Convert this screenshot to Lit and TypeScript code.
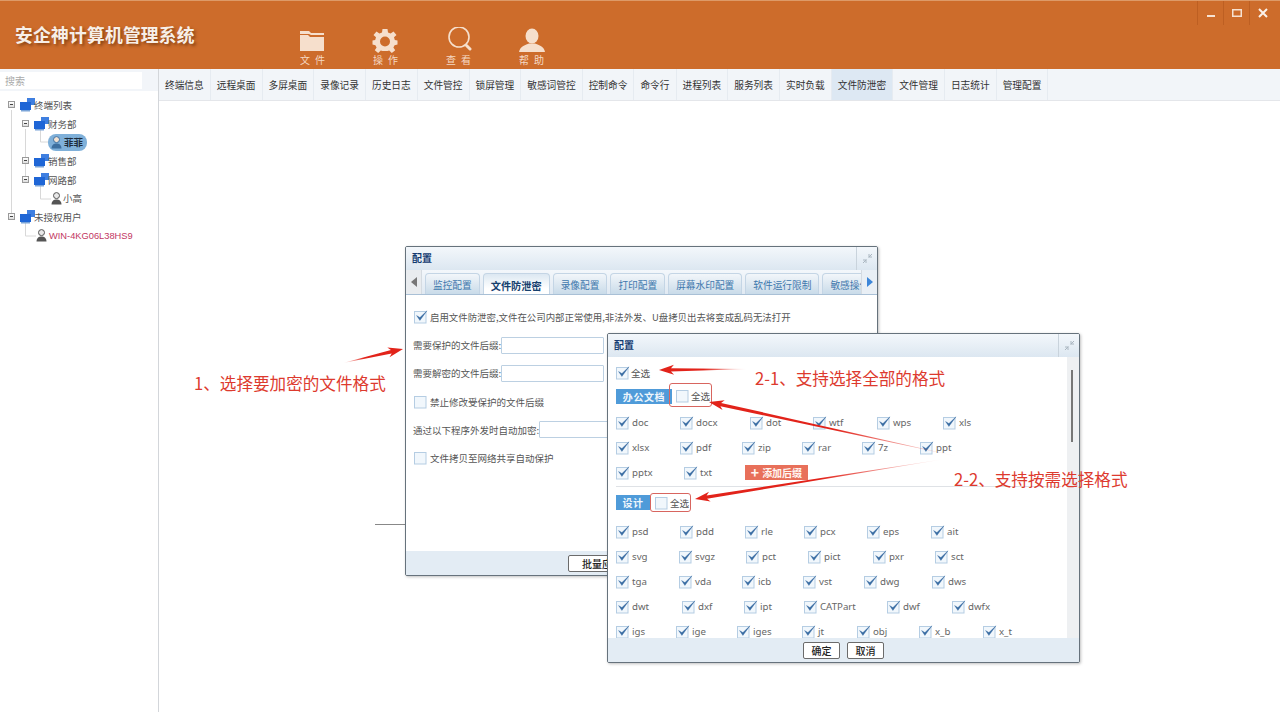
import { LitElement, html, css, svg } from "lit";
import { customElement } from "lit/decorators.js";

type Item = [string, number];
const rowsA: Item[][] = [
  [["doc", 64], ["docx", 70], ["dot", 63], ["wtf", 64], ["wps", 66], ["xls", 60]],
  [["xlsx", 64], ["pdf", 62], ["zip", 60], ["rar", 60], ["7z", 58], ["ppt", 60]],
];
const rowsB: Item[][] = [
  [["psd", 64], ["pdd", 65], ["rle", 59], ["pcx", 63], ["eps", 64], ["ait", 60]],
  [["svg", 63], ["svgz", 67], ["pct", 62], ["pict", 65], ["pxr", 62], ["sct", 60]],
  [["tga", 63], ["vda", 63], ["icb", 61], ["vst", 61], ["dwg", 68], ["dws", 60]],
  [["dwt", 66], ["dxf", 62], ["ipt", 60], ["CATPart", 83], ["dwf", 65], ["dwfx", 60]],
  [["igs", 60], ["ige", 61], ["iges", 65], ["jt", 55], ["obj", 62], ["x_b", 64], ["x_t", 60]],
];
const mainTabs = ["终端信息", "远程桌面", "多屏桌面", "录像记录", "历史日志", "文件管控", "锁屏管理", "敏感词管控", "控制命令", "命令行", "进程列表", "服务列表", "实时负载", "文件防泄密", "文件管理", "日志统计", "管理配置"];
const cfgTabs = ["监控配置", "文件防泄密", "录像配置", "打印配置", "屏幕水印配置", "软件运行限制", "敏感操作"];

const check = (on: boolean) => html`<svg class="cb" width="15" height="14" viewBox="0 0 15 14">
  <rect x="0.5" y="1.5" width="11.5" height="11.5" fill="#f1f7fc" stroke="#b5cde3"/>
  ${on ? svg`<path d="M2.6 5.6 L5.9 10.4 L13 .8 L5.9 7.6 Z" fill="#3a6da3" stroke="#3a6da3" stroke-width=".4" stroke-linejoin="round"/>` : ""}
</svg>`;

const netIcon = html`<svg class="net" width="15" height="14" viewBox="0 0 15 14">
  <rect x="7" y="0" width="8" height="7" fill="#3f7fe0"/>
  <rect x="0" y="4" width="11" height="8" fill="#1f66d6"/>
  <rect x="1" y="12" width="9" height="1.5" fill="#7aa4d8"/>
</svg>`;
const userIcon = (fill = "#555", face = "#e8e8e8") => html`<svg width="11" height="13" viewBox="0 0 11 13">
  <circle cx="5.5" cy="3.6" r="3" fill="${face}" stroke="${fill}" stroke-width="1"/>
  <path d="M0.5 12.5 C0.8 8.6 3 7.6 5.5 7.6 C8 7.6 10.2 8.6 10.5 12.5 Z" fill="${fill}"/>
</svg>`;

function arrow(id: string, tx: number, ty: number, hx: number, hy: number, solidFrom: number) {
  const dx = hx - tx, dy = hy - ty, L = Math.hypot(dx, dy);
  const ux = dx / L, uy = dy / L, nx = -uy, ny = ux;
  const p = (along: number, off: number) => `${(hx - ux * along + nx * off).toFixed(1)},${(hy - uy * along + ny * off).toFixed(1)}`;
  const pts = [p(0, 0), p(15, 5), p(12, 1.7), p(L, 0), p(12, -1.7), p(15, -5)].join(" ");
  return svg`<linearGradient id="${id}" gradientUnits="userSpaceOnUse" x1="${tx}" y1="${ty}" x2="${hx}" y2="${hy}">
      <stop offset="0" stop-color="#e2231a" stop-opacity="0"/>
      <stop offset="${solidFrom}" stop-color="#e2231a"/>
      <stop offset="1" stop-color="#e2231a"/>
    </linearGradient>
    <polygon points="${pts}" fill="url(#${id})"/>`;
}

@customElement("app-root")
export class AppRoot extends LitElement {
  static styles = css`
    :host { display: block; width: 1280px; height: 712px; position: relative; overflow: hidden; background: #fff;
      font-family: "Noto Sans CJK SC", "Noto Sans", sans-serif; font-size: 10px; color: #555; }
    .page { display: flex; flex-direction: column; height: 712px; }
    header { height: 69px; flex: none; display: flex; background: #cd6c2b; border-top: 1px solid #dd9a68; box-sizing: border-box; }
    .brand { width: 261px; margin-left: 15px; color: #f7efe8; font-size: 17.8px; font-weight: 700; line-height: 69px; height: 68px; margin-top: -1px;
      text-shadow: 2px 2px 3px rgba(90,40,5,.6); letter-spacing: .2px; white-space: nowrap; }
    .nav { display: flex; }
    .nav-item { width: 73px; display: flex; flex-direction: column; align-items: center; padding-top: 26px; box-sizing: border-box; color: #f5d9c3; }
    .nav-item svg { display: block; height: 26px; }
    .nudge-l { margin-left: -2px; }
    .nav-item span { font-size: 10px; letter-spacing: 5px; margin-right: -5px; line-height: 12px; margin-top: 1px; }
    .win { margin-left: auto; display: flex; align-self: flex-start; margin-right: 5px; }
    .win div { width: 26px; height: 24px; border-left: 1px solid #bd5f22; display: flex; align-items: center; justify-content: center; box-sizing: border-box; }
    .body { flex: 1; display: flex; min-height: 0; }
    aside { width: 159px; flex: none; box-sizing: border-box; border-right: 1px solid #d3d6da; background: #fff; }
    .search-wrap { height: 22px; background: #f2f5f9; padding: 3px 16px 2px 0; box-sizing: border-box; }
    .search { height: 17px; background: #fff; color: #aaa; padding-left: 5px; line-height: 17px; font-size: 10px; }
    .tree { position: relative; padding-top: 4.5px; font-size: 9.5px; }
    .guides { position: absolute; left: 0; top: -91px; pointer-events: none; }
    .row { height: 18.7px; display: flex; align-items: center; position: relative; white-space: nowrap; color: #555; }
    .exp { width: 7px; height: 7px; border: 1px solid #999; box-sizing: border-box; background: linear-gradient(#fff, #ddd) ; margin-right: 5px; position: relative; flex: none; }
    .exp::after { content: ""; position: absolute; left: 1px; right: 1px; top: 2px; height: 1px; background: #444; }
    .net { margin-right: -1px; flex: none; }
    .pill { display: flex; align-items: center; gap: 2px; background: #7fb0d9; height: 17px; width: 39px; border-radius: 8px; padding-left: 3px; box-sizing: border-box; color: #1d2b3a; font-weight: 700; }
    .leaf-text { margin-left: 1px; }
    .red { color: #c2365f; font-family: "Liberation Sans", sans-serif; font-size: 9.3px; margin-left: 2px; }
    main { flex: 1; min-width: 0; }
    .tabs { height: 32px; background: #f2f5f9; border-bottom: 1px solid #e4e6ea; box-sizing: border-box; display: flex; }
    .tab { padding: 0 6px; font-size: 9.7px; line-height: 33px; color: #333; border-right: 1px solid #e6ebf1; white-space: nowrap; }
    .tab.on { background: #dde8f3; }
    .stub { position: absolute; left: 375px; top: 524px; width: 30px; height: 1px; background: #888; }
    .dlg { position: absolute; box-sizing: border-box; width: 473px; height: 330px; background: #fff; border: 1px solid #66727c; border-radius: 2px;
      box-shadow: 1px 1px 3px rgba(0,0,0,.25); display: flex; flex-direction: column; overflow: hidden; }
    .d1 { left: 405px; top: 246px; }
    .d2 { left: 607px; top: 333px; }
    .title { height: 23px; flex: none; display: flex; align-items: center; padding: 0 0 2px 6px; box-sizing: border-box; background: linear-gradient(#f3f7fb, #dce7f1); color: #123a70; font-weight: 700; font-size: 10px; position: relative; }
    .tclose { position: absolute; right: 0; top: 0; width: 21px; height: 23px; border-left: 1px solid #c9d3dc; box-sizing: border-box; display: flex; align-items: center; justify-content: center; }
    .strip { height: 25px; flex: none; display: flex; background: linear-gradient(#f3f7fb, #e0e9f2); border-bottom: 1px solid #a9c0d6; box-sizing: border-box; position: relative; overflow: hidden; }
    .side { width: 16px; flex: none; background: #e9ecef; display: flex; align-items: center; justify-content: center; border-right: 1px solid #d5dbe1; box-sizing: border-box; }
    .side.r { position: absolute; right: 0; top: 0; bottom: 0; background: #e9eff5; border-right: 0; border-left: 1px solid #d5dbe1; }
    .ctabs { display: flex; gap: 3px; padding: 3px 0 0 3px; }
    .ctab { padding: 0 7px; height: 21px; line-height: 23px; font-size: 9.7px; color: #3f78ad; white-space: nowrap; border: 1px solid #c4d5e5; border-bottom: 0; border-radius: 4px 4px 0 0; box-sizing: border-box;
      background: linear-gradient(#f2f6fa, #c9dbe9); }
    .ctab.on { background: linear-gradient(#dce8f2, #fff 70%); color: #15406e; font-weight: 700; font-size: 10.2px; height: 22px; }
    .cfg { flex: 1; padding: 8px 0 0 7px; display: flex; flex-direction: column; font-size: 9.5px; }
    .line { height: 28.2px; display: flex; align-items: center; white-space: nowrap; color: #555; }
    .line .cb { margin: 0 1px 0 1px; }
    .narrow { font-size: 9.43px; }
    input { box-sizing: border-box; height: 17px; border: 1px solid #bcd0e2; border-radius: 1px; background: #fff; margin: 0; padding: 0; }
    .w103 { width: 103px; }
    .w150 { width: 150px; }
    .foot { height: 24px; flex: none; background: #e3ecf4; display: flex; align-items: center; }
    .foot.left { padding-left: 162px; }
    .foot.mid { justify-content: center; gap: 7px; }
    .btn { height: 17px; box-sizing: border-box; width: 37px; border: 1px solid #6b6b6b; border-radius: 2px; background: #fff; color: #222; text-align: center; line-height: 15px; font-size: 10px; font-weight: 500; white-space: nowrap; }
    .btn.wide { width: 68px; }
    .d2body { flex: 1; min-height: 0; display: flex; position: relative; }
    .scroll { flex: 1; overflow: hidden; padding: 3px 0 0 8px; }
    .sbar { width: 12px; flex: none; background: #eef0f2; position: relative; }
    .thumb { position: absolute; left: 4px; top: 13px; width: 2px; height: 72px; background: #777; }
    .all { height: 25px; display: flex; align-items: center; font-size: 9.6px; }
    .sec { display: flex; align-items: center; height: 25px; padding-bottom: 3px; box-sizing: border-box; font-size: 9.6px; }
    .lab { background: #4f9bd9; color: #eef6fc; height: 15px; line-height: 15px; font-weight: 700; text-align: center; font-size: 10px; letter-spacing: .6px; box-sizing: border-box; }
    .l56 { width: 56px; }
    .l34 { width: 34px; }
    .selall { display: flex; align-items: center; margin-left: 4px; }
    .selall.near { margin-left: 5px; }
    .sec2 { margin-top: 3px; height: 29px; padding-bottom: 4px; }
    .items { display: flex; height: 25px; align-items: center; }
    .it { display: flex; align-items: center; gap: 1px; color: #666; font-family: "Noto Sans", sans-serif; font-size: 9.7px; flex: none; white-space: nowrap; }
    .add { background: #e8705a; color: #fff6f2; font-weight: 700; height: 15px; width: 63px; display: flex; align-items: center; justify-content: center; gap: 3px; font-size: 10px; }
    .plus { font-size: 14px; line-height: 15px; font-weight: 700; }
    .sep { height: 1px; background: #dfe2e6; margin: 1px 6px 0 0; }
    .overlay { position: absolute; inset: 0; pointer-events: none; }
    .note { position: absolute; color: #dd3a2e; font-size: 16.6px; line-height: 20px; white-space: nowrap; }
    .n1 { left: 194px; top: 373px; }
    .n2 { left: 755px; top: 368px; }
    .n3 { left: 954px; top: 469px; }
    .rbox { position: absolute; border: 1px solid #d8655f; border-radius: 3px; box-sizing: border-box; }
    .b1 { left: 669px; top: 383px; width: 43px; height: 24px; }
    .b2 { left: 650px; top: 493px; width: 41px; height: 19px; }
  `;

  private item(i: Item) {
    return html`<div class="it" style="width:${i[1]}px">${check(true)}<span>${i[0]}</span></div>`;
  }

  render() {
    return html`
    <div class="page">
      <header>
        <div class="brand">安企神计算机管理系统</div>
        <div class="nav">
          <div class="nav-item">
            <svg class="nudge-l" width="26" height="26" viewBox="0 0 26 26"><path d="M1 4 H10 L12 6 H25 V8 H12 L10 7 H1 Z M1 8 H9 L11 10 H25 V24 H1 Z" fill="#f6dfcc"/></svg>
            <span>文件</span>
          </div>
          <div class="nav-item">
            <svg class="nudge-l" width="26" height="26" viewBox="0 0 26 26"><path fill="#f6dfcc" fill-rule="evenodd" d="M10.5 2 H15.5 L16 5.5 L18.6 6.6 L21.5 4.5 L24.5 8 L22 10.3 L22.8 13 L25.5 13.5 V17.5 L22.6 18.2 L21.4 20.5 L23.2 23.2 L19.8 26 L17.2 23.6 L15.5 24 H10.5 L8.8 23.6 L6.2 26 L2.8 23.2 L4.6 20.5 L3.4 18.2 L.5 17.5 V13.5 L3.2 13 L4 10.3 L1.5 8 L4.5 4.5 L7.4 6.6 L10 5.5 Z M13 9.5 A5 5 0 1 0 13 19.5 A5 5 0 1 0 13 9.5 Z"/></svg>
            <span>操作</span>
          </div>
          <div class="nav-item">
            <svg width="26" height="26" viewBox="0 0 26 26"><circle cx="13" cy="10" r="10" fill="none" stroke="#f6dfcc" stroke-width="1.6"/><path d="M20.5 18.5 L24 22" stroke="#f6dfcc" stroke-width="3" stroke-linecap="round"/></svg>
            <span>查看</span>
          </div>
          <div class="nav-item">
            <svg width="28" height="26" viewBox="0 0 28 26"><ellipse cx="14" cy="9" rx="6.5" ry="7.5" fill="#f6dfcc"/><path d="M1 25 C2 19 8 18 11 16.5 H17 C20 18 26 19 27 25 Z" fill="#f6dfcc"/></svg>
            <span>帮助</span>
          </div>
        </div>
        <div class="win">
          <div><svg width="10" height="10" viewBox="0 0 10 10"><rect x="1" y="7" width="8" height="2" fill="#f6e2d2"/></svg></div>
          <div><svg width="10" height="10" viewBox="0 0 10 10"><rect x=".75" y="1.75" width="8.5" height="6.5" fill="none" stroke="#f6e2d2" stroke-width="1.5"/></svg></div>
          <div><svg width="10" height="10" viewBox="0 0 10 10"><path d="M1 1 L9 9 M9 1 L1 9" stroke="#fbf1e9" stroke-width="2"/></svg></div>
        </div>
      </header>
      <div class="body">
        <aside>
          <div class="search-wrap"><div class="search">搜索</div></div>
          <div class="tree">
            <svg class="guides" width="158" height="260">
              <g stroke="#d8d8d8" fill="none">
                <path d="M11.5 110 V217 M25.5 129 V180 M40.5 129 V142 H48 M40.5 186 V199 H51 M25.5 222 V236 H36"/>
              </g>
            </svg>
            <div class="row" style="padding-left:8px"><i class="exp"></i>${netIcon}<span>终端列表</span></div>
            <div class="row" style="padding-left:22px"><i class="exp"></i>${netIcon}<span>财务部</span></div>
            <div class="row" style="padding-left:48px"><div class="pill">${userIcon("#3d6f9f", "#f3e2d2")}<span>菲菲</span></div></div>
            <div class="row" style="padding-left:22px"><i class="exp"></i>${netIcon}<span>销售部</span></div>
            <div class="row" style="padding-left:22px"><i class="exp"></i>${netIcon}<span>网路部</span></div>
            <div class="row" style="padding-left:51px">${userIcon()}<span class="leaf-text">小高</span></div>
            <div class="row" style="padding-left:8px"><i class="exp"></i>${netIcon}<span>未授权用户</span></div>
            <div class="row" style="padding-left:36px">${userIcon()}<span class="red">WIN-4KG06L38HS9</span></div>
          </div>
        </aside>
        <main>
          <div class="tabs">
            ${mainTabs.map((t) => html`<div class="tab ${t === "文件防泄密" ? "on" : ""}">${t}</div>`)}
          </div>
        </main>
      </div>
    </div>

    <div class="stub"></div>

    <div class="dlg d1">
      <div class="title">配置
        <div class="tclose"><svg width="11" height="11" viewBox="0 0 11 11"><path d="M10 1 L6.5 4.5 M4.5 6.5 L1 10 M7 1 V4 H10 M1 7 H4 V10" stroke="#aab6c0" fill="none"/></svg></div>
      </div>
      <div class="strip">
        <div class="side"><svg width="6" height="10" viewBox="0 0 6 10"><path d="M6 0 V10 L0 5 Z" fill="#777"/></svg></div>
        <div class="ctabs">
          ${cfgTabs.map((t) => html`<div class="ctab ${t === "文件防泄密" ? "on" : ""}">${t}</div>`)}
        </div>
        <div class="side r"><svg width="6" height="10" viewBox="0 0 6 10"><path d="M0 0 V10 L6 5 Z" fill="#3d86d8"/></svg></div>
      </div>
      <div class="cfg">
        <div class="line">${check(true)}<span class="narrow">启用文件防泄密,文件在公司内部正常使用,非法外发、U盘拷贝出去将变成乱码无法打开</span></div>
        <div class="line"><span>需要保护的文件后缀:</span><input class="w103" /></div>
        <div class="line"><span>需要解密的文件后缀:</span><input class="w103" /></div>
        <div class="line">${check(false)}<span>禁止修改受保护的文件后缀</span></div>
        <div class="line"><span>通过以下程序外发时自动加密:</span><input class="w150" /></div>
        <div class="line">${check(false)}<span>文件拷贝至网络共享自动保护</span></div>
      </div>
      <div class="foot left"><div class="btn wide">批量应用</div></div>
    </div>

    <div class="dlg d2">
      <div class="title">配置
        <div class="tclose"><svg width="11" height="11" viewBox="0 0 11 11"><path d="M10 1 L6.5 4.5 M4.5 6.5 L1 10 M7 1 V4 H10 M1 7 H4 V10" stroke="#aab6c0" fill="none"/></svg></div>
      </div>
      <div class="d2body">
        <div class="scroll">
          <div class="all">${check(true)}<span>全选</span></div>
          <div class="sec"><div class="lab l56">办公文档</div><div class="selall">${check(false)}<span>全选</span></div></div>
          ${rowsA.map((r) => html`<div class="items">${r.map((i) => this.item(i))}</div>`)}
          <div class="items">
            ${this.item(["pptx", 68])}
            ${this.item(["txt", 61])}
            <div class="add"><span class="plus">+</span><span>添加后缀</span></div>
          </div>
          <div class="sep"></div>
          <div class="sec sec2"><div class="lab l34">设计</div><div class="selall near">${check(false)}<span>全选</span></div></div>
          ${rowsB.map((r) => html`<div class="items">${r.map((i) => this.item(i))}</div>`)}
        </div>
        <div class="sbar"><div class="thumb"></div></div>
      </div>
      <div class="foot mid"><div class="btn">确定</div><div class="btn">取消</div></div>
    </div>

    <div class="rbox b1"></div>
    <div class="rbox b2"></div>
    <svg class="overlay" width="1280" height="712">
      ${arrow("a1", 343, 363, 403, 349, 0.35)}
      ${arrow("a2", 748, 369, 659, 370, 0.5)}
      ${arrow("a3", 960, 457, 709, 402, 0.5)}
      ${arrow("a4", 945, 459, 695, 499, 0.5)}
    </svg>
    <div class="note n1">1、选择要加密的文件格式</div>
    <div class="note n2">2-1、支持选择全部的格式</div>
    <div class="note n3">2-2、支持按需选择格式</div>
    `;
  }
}
